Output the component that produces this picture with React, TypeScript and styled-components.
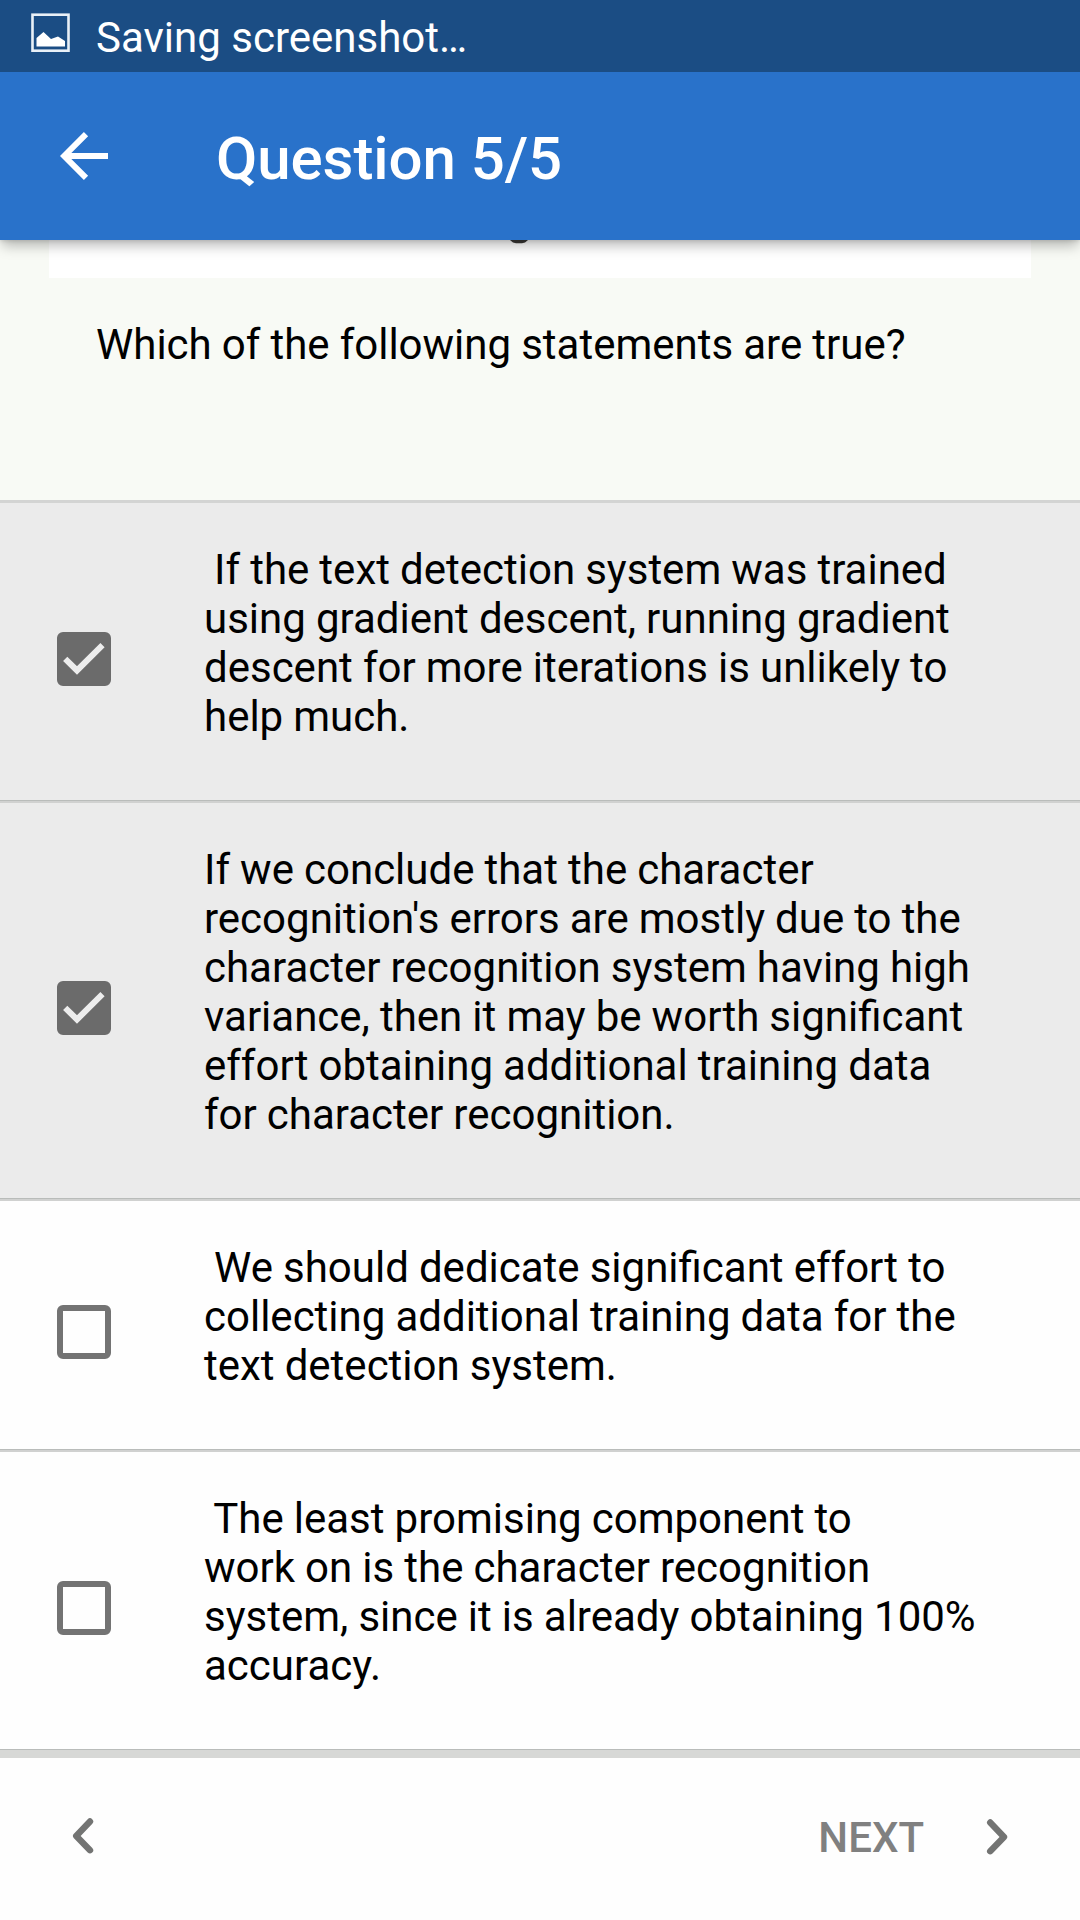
import React from "react";
import styled, { createGlobalStyle } from "styled-components";

const GlobalStyle = createGlobalStyle`
  * { box-sizing: border-box; }
  body {
    margin: 0;
    background: #fff;
    color: #000;
    font-family: Roboto, "Liberation Sans", sans-serif;
    font-size: 42px;
    line-height: 49px;
  }
`;

const Screen = styled.div`
  display: flex;
  flex-direction: column;
  width: 1080px;
  height: 1920px;
  overflow: hidden;
  background: #fefefe;
`;

const StatusBar = styled.div`
  position: relative;
  z-index: 2;
  display: flex;
  align-items: flex-start;
  flex: none;
  height: 72px;
  padding: 13px 0 0 31px;
  background: #1b4d84;
  color: #fff;
`;

const StatusText = styled.span`
  margin-left: 26px;
`;

const AppBar = styled.header`
  position: relative;
  z-index: 1;
  display: flex;
  align-items: flex-start;
  flex: none;
  height: 168px;
  padding: 0 60px;
  background: #2972ca;
  box-shadow: 0 8px 12px -2px rgba(0, 0, 0, 0.26), 0 1px 4px rgba(0, 0, 0, 0.12);
  color: #fff;
`;

const BackIcon = styled.svg`
  margin-top: 60px;
`;

const Title = styled.h1`
  margin: 51px 0 0 108px;
  font-size: 60px;
  font-weight: 500;
  line-height: 72px;
  letter-spacing: -0.08px;
`;

const Question = styled.section`
  display: flex;
  flex-direction: column;
  flex: none;
  height: 260px;
  background: #f8faf5;
`;

const Figure = styled.div`
  height: 38px;
  margin: 0 49px;
  padding-left: 460px;
  background: #fff;
  overflow: hidden;
`;

const FigureGlyph = styled.svg`
  display: block;
`;

const Prompt = styled.p`
  margin: 42px 0 0 96px;
  word-spacing: -0.35px;
`;

const Divider = styled.div<{ $thick?: boolean }>`
  flex: none;
  height: ${(p) => (p.$thick ? 9 : 3)}px;
  border-top: 1px solid #b9bcba;
  background: ${(p) => (p.$thick ? "#d7d8d6" : "#d0d1d0")};
`;

const SoftDivider = styled(Divider)`
  border-top-color: #d3d4d3;
  background: #d3d4d3;
`;

const Answer = styled.div<{ $selected: boolean }>`
  display: flex;
  align-items: center;
  flex: none;
  padding: 42px 57px 59px;
  background: ${(p) => (p.$selected ? "#ebebeb" : "#fefefe")};
`;

const Checkbox = styled.span<{ $checked: boolean }>`
  display: flex;
  flex: none;
  width: 54px;
  height: 54px;
  margin-top: 31.6px;
  border: 6px solid ${(p) => (p.$checked ? "#6b6b6b" : "#737373")};
  border-radius: 6px;
  background: ${(p) => (p.$checked ? "#6b6b6b" : "transparent")};
`;

const AnswerText = styled.span`
  margin-left: 93px;
  white-space: pre;
  word-spacing: -0.35px;
`;

const Footer = styled.footer`
  display: flex;
  align-items: flex-start;
  justify-content: space-between;
  flex: 1;
  padding: 55px 72px 0;
`;

const NavButton = styled.button<{ $gap?: number }>`
  display: flex;
  gap: ${(p) => p.$gap ?? 0}px;
  padding: 0;
  border: 0;
  background: none;
  color: #808080;
  font: 500 42px/49px Roboto, "Liberation Sans", sans-serif;
`;

const ChevronSvg = styled.svg<{ $top: number }>`
  display: block;
  margin-top: ${(p) => p.$top}px;
`;

const answers = [
  {
    checked: true,
    lines: [
      " If the text detection system was trained",
      "using gradient descent, running gradient",
      "descent for more iterations is unlikely to",
      "help much.",
    ],
  },
  {
    checked: true,
    lines: [
      "If we conclude that the character",
      "recognition's errors are mostly due to the",
      "character recognition system having high",
      "variance, then it may be worth significant",
      "effort obtaining additional training data",
      "for character recognition.",
    ],
  },
  {
    checked: false,
    lines: [
      " We should dedicate significant effort to",
      "collecting additional training data for the",
      "text detection system.",
    ],
  },
  {
    checked: false,
    lines: [
      " The least promising component to",
      "work on is the character recognition",
      "system, since it is already obtaining 100%",
      "accuracy.",
    ],
  },
];

function Chevron({ d, top }: { d: string; top: number }) {
  return (
    <ChevronSvg $top={top} width="22" height="36" viewBox="0 0 22 36" fill="none"
      stroke="#737473" strokeWidth="6.4" strokeLinecap="round" strokeLinejoin="round">
      <path d={d} />
    </ChevronSvg>
  );
}

export default function App() {
  return (
    <>
      <GlobalStyle />
      <Screen>
        <StatusBar>
          <svg width="39" height="39" viewBox="0 0 39 39">
            <rect x="1.5" y="1.7" width="36" height="36" fill="none" stroke="#e9f0f7" strokeWidth="2.6" />
            <path d="M5.5 33.5V25L12.5 19L20 26L27 23.5L34 28V33.5Z" fill="#fff" />
          </svg>
          <StatusText>Saving screenshot…</StatusText>
        </StatusBar>
        <AppBar>
          <BackIcon width="48" height="48" viewBox="0 0 48 48" fill="none" stroke="#fff" strokeWidth="6">
            <path d="M48 24H6M26 2.2L4.2 24L26 45.8" />
          </BackIcon>
          <Title>Question 5/5</Title>
        </AppBar>
        <Question>
          <Figure>
            <FigureGlyph width="20" height="4" viewBox="0 0 20 4">
              <path d="M1 0H19L16 2.4Q10 4.2 4 2.4Z" fill="#3a3836" />
            </FigureGlyph>
          </Figure>
          <Prompt>Which of the following statements are true?</Prompt>
        </Question>
        <SoftDivider />
        {answers.map((a, i) => (
          <React.Fragment key={i}>
            <Answer $selected={a.checked}>
              <Checkbox $checked={a.checked}>
                {a.checked && (
                  <svg width="42" height="42" viewBox="0 0 42 42" fill="none" stroke="#ededed" strokeWidth="6">
                    <path d="M2.2 20.8L14 32.5L39.5 7.2" />
                  </svg>
                )}
              </Checkbox>
              <AnswerText>{a.lines.join("\n")}</AnswerText>
            </Answer>
            <Divider $thick={i === answers.length - 1} />
          </React.Fragment>
        ))}
        <Footer>
          <NavButton aria-label="Previous">
            <Chevron top={5} d="M18 3.5L4.2 18L18 32.2" />
          </NavButton>
          <NavButton $gap={62}>
            NEXT
            <Chevron top={6} d="M4.2 3.5L18 18L4.2 32.2" />
          </NavButton>
        </Footer>
      </Screen>
    </>
  );
}
